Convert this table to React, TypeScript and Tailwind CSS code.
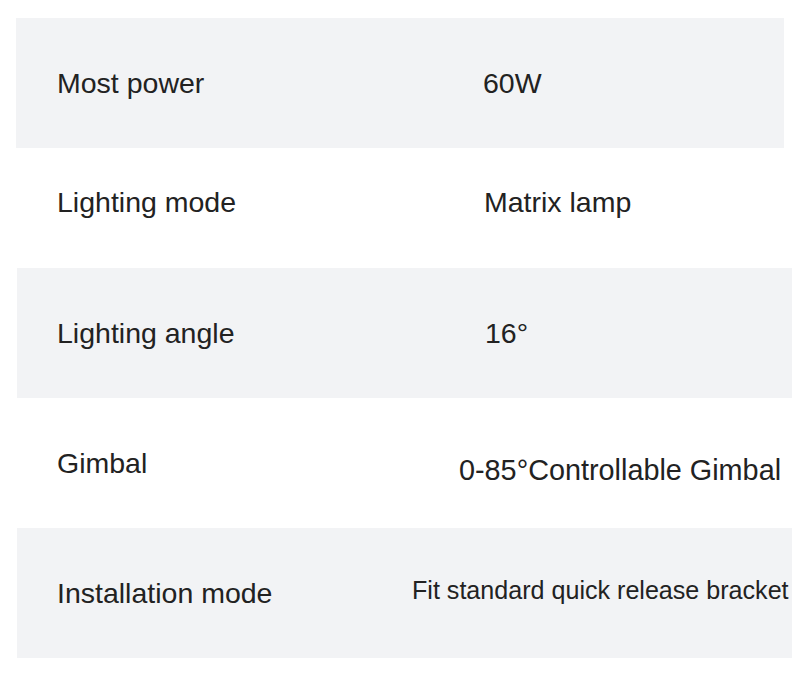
import React from "react";

const font = { fontFamily: '"Liberation Sans", Arial, sans-serif' };

export default function App() {
  return (
    <div className="w-[800px] h-[679px] bg-white pt-[18px] text-[#222222]" style={font}>
      {/* Row 1 */}
      <div className="ml-[16px] w-[768px] h-[130px] bg-[#f2f3f5] flex items-center pl-[41px] text-[28.5px]">
        <div className="w-[426px]">Most power</div>
        <div>60W</div>
      </div>
      {/* Row 2 */}
      <div className="ml-[16px] w-[776px] h-[120px] flex items-center pl-[41px] pb-[11px] text-[28.5px]">
        <div className="w-[427px]">Lighting mode</div>
        <div>Matrix lamp</div>
      </div>
      {/* Row 3 */}
      <div className="ml-[17px] w-[775px] h-[130px] bg-[#f2f3f5] flex items-center pl-[40px] text-[28.5px]">
        <div className="w-[428px]">Lighting angle</div>
        <div>16°</div>
      </div>
      {/* Row 4 */}
      <div className="ml-[17px] w-[775px] h-[130px] flex items-center pl-[40px] text-[28.5px]">
        <div className="w-[402px]">Gimbal</div>
        <div className="mt-[15px] text-[28.8px] whitespace-nowrap">0-85°Controllable Gimbal</div>
      </div>
      {/* Row 5 */}
      <div className="ml-[17px] w-[775px] h-[130px] bg-[#f2f3f5] flex items-center pl-[40px] text-[28.5px]">
        <div className="w-[355px]">Installation mode</div>
        <div className="mb-[4px] text-[25.1px] whitespace-nowrap">Fit standard quick release bracket</div>
      </div>
    </div>
  );
}
